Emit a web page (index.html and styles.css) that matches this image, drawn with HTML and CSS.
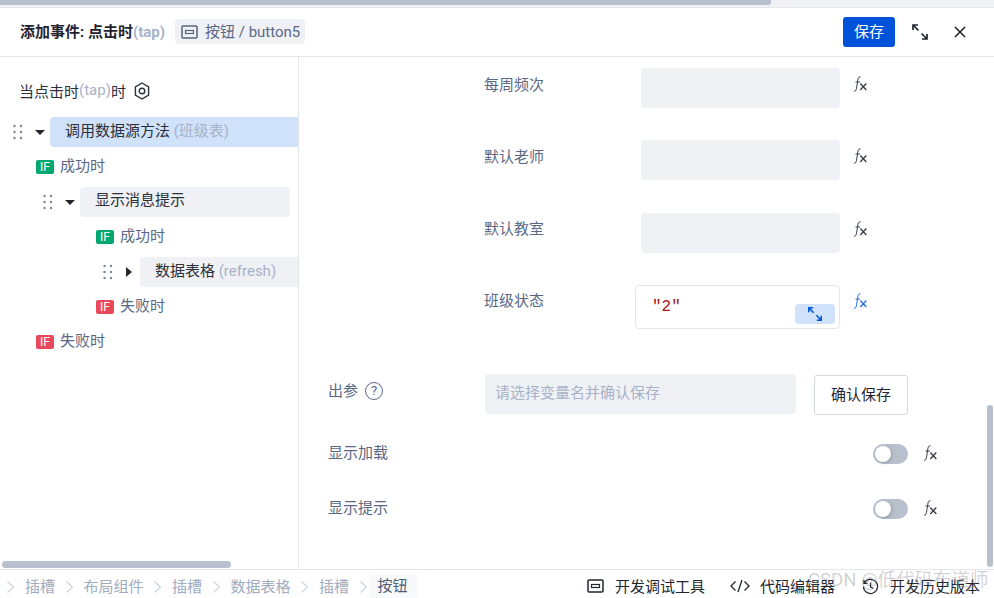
FILE: index.html
```html
<!DOCTYPE html>
<html lang="zh">
<head>
<meta charset="utf-8">
<title>添加事件</title>
<link rel="stylesheet" href="styles.css">
</head>
<body>
<svg class="defs" width="0" height="0" aria-hidden="true">
  <symbol id="fx" viewBox="0 0 14 16">
    <path d="M1 15.200c1.300.3 2-.6 2.400-2.400L5 3c.3-1.700 1.200-2.400 2.600-2.100M2.500 6H7" fill="none" stroke="currentColor" stroke-width="1"/>
    <path d="M7.300 7.500l6 6.500M13.300 7.500l-6 6.500" fill="none" stroke="currentColor" stroke-width="1.400"/>
  </symbol>
  <symbol id="expand" viewBox="0 0 18 18">
    <path d="M2 7V2h5M2 2l5.500 5.500M16 11v5h-5M16 16l-5.500-5.500" fill="none" stroke="currentColor" stroke-width="1.700"/>
  </symbol>
  <symbol id="btnicon" viewBox="0 0 17 14">
    <rect x="1" y="1" width="15" height="12" rx="1" fill="none" stroke="currentColor" stroke-width="1.500"/>
    <rect x="4.500" y="5.500" width="8" height="3" fill="none" stroke="currentColor" stroke-width="1.200"/>
  </symbol>
  <symbol id="grip" viewBox="0 0 10 16">
    <g fill="currentColor"><circle cx="1.500" cy="2" r="1.200"/><circle cx="8" cy="2" r="1.200"/><circle cx="1.500" cy="8" r="1.200"/><circle cx="8" cy="8" r="1.200"/><circle cx="1.500" cy="14" r="1.200"/><circle cx="8" cy="14" r="1.200"/></g>
  </symbol>
  <symbol id="chev" viewBox="0 0 7 12">
    <path d="M.5 .5l6 5.500-6 5.500" fill="none" stroke="currentColor" stroke-width="1.200"/>
  </symbol>
</svg>

<div class="topbar"><div class="topbar-thumb"></div></div>

<header class="header">
  <div class="title">添加事件: 点击时<span class="muted">(tap)</span></div>
  <div class="tag"><svg class="tag-icon"><use href="#btnicon"/></svg>按钮 / button5</div>
  <div class="header-actions">
    <button class="save">保存</button>
    <svg class="icon-expand"><use href="#expand"/></svg>
    <svg class="icon-close" viewBox="0 0 12 12"><path d="M1 1l10 10M11 1L1 11" fill="none" stroke="currentColor" stroke-width="1.600"/></svg>
  </div>
</header>

<main class="main">
  <aside class="tree">
    <div class="tree-head">当点击时<span class="muted">(tap)</span>时
      <svg class="icon-hex" viewBox="0 0 16 18"><path d="M8 1l6.600 3.800v8.400L8 17l-6.600-3.800V4.800z" fill="none" stroke="currentColor" stroke-width="1.400"/><circle cx="8" cy="9" r="2.800" fill="none" stroke="currentColor" stroke-width="1.400"/></svg>
    </div>
    <div class="tree-list">
      <div class="node">
        <svg class="grip"><use href="#grip"/></svg><span class="caret-down"></span>
        <div class="box box-active">调用数据源方法 <span class="muted">(班级表)</span></div>
      </div>
      <div class="cond d1"><span class="badge badge-ok">IF</span>成功时</div>
      <div class="node d1 short">
        <svg class="grip"><use href="#grip"/></svg><span class="caret-down"></span>
        <div class="box">显示消息提示</div>
      </div>
      <div class="cond d2"><span class="badge badge-ok">IF</span>成功时</div>
      <div class="node d2">
        <svg class="grip"><use href="#grip"/></svg><span class="caret-right"></span>
        <div class="box">数据表格 <span class="muted">(refresh)</span></div>
      </div>
      <div class="cond d2"><span class="badge badge-fail">IF</span>失败时</div>
      <div class="cond d1"><span class="badge badge-fail">IF</span>失败时</div>
    </div>
    <div class="hscroll"></div>
  </aside>

  <section class="panel">
    <div class="params">
      <div class="param"><label class="param-label">每周频次</label><div class="input"></div><svg class="fx"><use href="#fx"/></svg></div>
      <div class="param"><label class="param-label">默认老师</label><div class="input"></div><svg class="fx"><use href="#fx"/></svg></div>
      <div class="param"><label class="param-label">默认教室</label><div class="input"></div><svg class="fx"><use href="#fx"/></svg></div>
      <div class="param param-code"><label class="param-label">班级状态</label>
        <div class="code">"2"<span class="code-expand"><svg class="icon-expand-sm"><use href="#expand"/></svg></span></div>
        <svg class="fx fx-on"><use href="#fx"/></svg>
      </div>
    </div>
    <div class="output">
      <div class="output-label">出参<span class="help">?</span></div>
      <div class="output-input">请选择变量名并确认保存</div>
      <button class="confirm">确认保存</button>
    </div>
    <div class="switch-row first"><span class="switch-label">显示加载</span><div class="switch-end"><span class="toggle"></span><svg class="fx"><use href="#fx"/></svg></div></div>
    <div class="switch-row"><span class="switch-label">显示提示</span><div class="switch-end"><span class="toggle"></span><svg class="fx"><use href="#fx"/></svg></div></div>
    <div class="vscroll"></div>
  </section>
</main>

<footer class="footer">
  <nav class="crumbs">
    <svg class="chev"><use href="#chev"/></svg><span class="crumb">插槽</span>
    <svg class="chev"><use href="#chev"/></svg><span class="crumb">布局组件</span>
    <svg class="chev"><use href="#chev"/></svg><span class="crumb">插槽</span>
    <svg class="chev"><use href="#chev"/></svg><span class="crumb">数据表格</span>
    <svg class="chev"><use href="#chev"/></svg><span class="crumb">插槽</span>
    <svg class="chev"><use href="#chev"/></svg><span class="crumb crumb-last">按钮</span>
  </nav>
  <div class="tools">
    <div class="tool tool-debug"><svg class="tool-icon"><use href="#btnicon"/></svg>开发调试工具</div>
    <div class="tool tool-code"><svg class="tool-code-icon" viewBox="0 0 20 14"><path d="M5.500 2.500L1 7l4.500 4.500M14.500 2.500L19 7l-4.500 4.500M12 1L8 13" fill="none" stroke="currentColor" stroke-width="1.300"/></svg>代码编辑器</div>
    <div class="tool tool-hist"><svg class="tool-hist-icon" viewBox="0 0 18 18"><path d="M2.300 5.500A7.500 7.500 0 1 1 1.500 9M2 1.800v3.900h3.900M9 5v4.300l3 1.800" fill="none" stroke="currentColor" stroke-width="1.300"/></svg>开发历史版本</div>
  </div>
</footer>
<div class="watermark">CSDN @低代码布道师</div>
</body>
</html>
```
FILE: styles.css
```css
* { box-sizing: border-box; }
html, body { margin: 0; padding: 0; }
body {
  width: 994px;
  height: 598px;
  overflow: hidden;
  position: relative;
  display: flex;
  flex-direction: column;
  background: #fff;
  font-family: Roboto, "Noto Sans CJK SC", sans-serif;
  font-size: 15px;
  color: #5a6885;
}
.defs { position: absolute; }
.muted { color: #a6b2c8; }

.topbar { height: 8px; background: #f0f1f5; flex: none; border-bottom: 1px solid #e4e6ec; }
.topbar-thumb { width: 771px; height: 5px; background: #b8c0cd; border-radius: 0 0 3px 0; }

.header {
  flex: none;
  height: 49px;
  display: flex;
  align-items: center;
  padding-left: 20px;
  border-bottom: 1px solid #e4e6ec;
}
.title { font-weight: 700; color: #1f2430; margin-top: -4px; }
.tag {
  display: flex;
  align-items: center;
  height: 25px;
  margin: -1px 0 0 10px;
  padding: 0 0 2px 6px;
  width: 130px;
  background: #f0f1f5;
  border-radius: 4px;
  color: #5a6885;
  white-space: nowrap;
}
.tag-icon { width: 17px; height: 14px; margin: 2px 7px 0 0; color: #56647f; }
.header-actions { margin-left: auto; display: flex; align-items: center; padding-right: 28px; }
.save {
  width: 52px;
  height: 30px;
  border: 0;
  border-radius: 3px;
  background: #0052d9;
  color: #fff;
  font: inherit;
  padding: 0 0 3px;
}
.icon-expand { width: 18px; height: 18px; margin-left: 16px; color: #22262e; }
.icon-close { width: 12px; height: 12px; margin-left: 25px; color: #22262e; }

.main { flex: 1; min-height: 0; display: flex; }
.tree {
  flex: none;
  width: 299px;
  position: relative;
  border-right: 1px solid #e4e6ec;
  overflow: hidden;
}
.tree-head {
  display: flex;
  align-items: center;
  height: 20px;
  margin: 23px 0 0 19px;
  color: #2a2f3a;
}
.icon-hex { width: 16px; height: 18px; margin: 1px 0 0 8px; color: #2a2f3a; }
.tree-list { display: flex; flex-direction: column; gap: 5px; margin-top: 17px; }
.node { display: flex; align-items: center; height: 30px; padding-left: 13px; }
.node.d1 { padding-left: 43px; }
.node.d2 { padding-left: 103px; }
.node.short { padding-right: 8px; }
.grip { width: 10px; height: 16px; color: #7b8494; flex: none; }
.caret-down, .caret-right { width: 0; height: 0; flex: none; border-style: solid; }
.caret-down { margin: 0 5px 0 12px; border-width: 5px 5px 0 5px; border-color: #22262e transparent transparent; }
.caret-right { margin: 0 8px 0 13px; border-width: 5px 0 5px 6px; border-color: transparent transparent transparent #22262e; }
.box {
  flex: 1;
  height: 30px;
  line-height: 28px;
  padding-left: 15px;
  background: #f0f1f5;
  border-radius: 4px 0 0 4px;
  color: #2a2f3a;
  white-space: nowrap;
}
.short .box { border-radius: 4px; line-height: 27px; }
.box-active { background: #d0e2fa; }
.cond { display: flex; align-items: center; height: 30px; padding: 0 0 6px 36px; }
.cond.d2 { padding-left: 96px; }
.badge {
  width: 18px;
  height: 14px;
  margin-right: 6px;
  margin-top: 5px;
  border-radius: 2px;
  color: #fff;
  font-size: 12px;
  line-height: 14px;
  text-align: center;
}
.badge-ok { background: #00a870; }
.badge-fail { background: #e8495b; }
.hscroll {
  position: absolute;
  left: 2px;
  bottom: 1px;
  width: 229px;
  height: 7px;
  border-radius: 4px;
  background: #b8c0cd;
}

.panel { flex: 1; min-width: 0; position: relative; overflow: hidden; }
.params { display: flex; flex-direction: column; gap: 32.300px; padding: 11px 0 0 185px; }
.param { display: flex; align-items: center; height: 40px; }
.param-label { width: 157px; margin-top: -10px; color: #5a6885; }
.input { width: 199px; height: 40px; background: #f0f1f5; border-radius: 4px; }
.fx { width: 14px; height: 16px; flex: none; color: #3a3f4a; }
.param .fx { margin: -8px 0 0 13px; }
.param-code { height: 44px; }
.param-code .param-label { width: 151px; margin-top: -14px; }
.param-code .fx { margin-top: -12px; }
.fx-on { color: #2a6fdb; }
.code {
  width: 205px;
  height: 44px;
  position: relative;
  padding: 10px 0 0 16px;
  border: 1px solid #e4e6ec;
  border-radius: 4px;
  font-family: "Liberation Mono", monospace;
  font-size: 16px;
  line-height: 22px;
  color: #a31515;
}
.code-expand {
  position: absolute;
  right: 4px;
  bottom: 4px;
  width: 40px;
  height: 20px;
  display: flex;
  align-items: center;
  justify-content: center;
  background: #d0e2fa;
  border-radius: 4px;
}
.icon-expand-sm { width: 16px; height: 16px; color: #0052d9; }

.output { display: flex; align-items: flex-start; margin-top: 45px; padding-left: 29px; }
.output-label { width: 157px; height: 40px; display: flex; align-items: center; margin-top: -4px; }
.help {
  width: 18px;
  height: 18px;
  margin: 3px 0 0 7px;
  border: 1.500px solid #5a6885;
  border-radius: 50%;
  font-size: 13px;
  line-height: 15px;
  text-align: center;
}
.output-input {
  width: 311px;
  height: 40px;
  padding-left: 10px;
  line-height: 38px;
  background: #f0f1f5;
  border-radius: 4px;
  color: #a6b2c8;
}
.confirm {
  width: 94px;
  height: 40px;
  margin: 1px 0 0 18px;
  padding: 0 0 2px;
  background: #fff;
  border: 1px solid #d5d9e2;
  border-radius: 3px;
  color: #1f2430;
  font: inherit;
}
.switch-row {
  display: flex;
  align-items: center;
  justify-content: space-between;
  height: 20px;
  margin-top: 35px;
  padding: 0 57px 0 29px;
}
.switch-row.first { margin-top: 29px; }
.switch-label { margin-top: -4px; }
.switch-end { display: flex; align-items: center; gap: 15px; }
.switch-end .fx { margin-top: -2px; }
.toggle {
  position: relative;
  width: 35px;
  height: 20px;
  border-radius: 10px;
  background: #b8c0cd;
}
.toggle::after {
  content: "";
  position: absolute;
  left: 2px;
  top: 2px;
  width: 16px;
  height: 16px;
  border-radius: 50%;
  background: #fff;
  box-shadow: 1px 1px 3px rgba(70, 80, 100, .35);
}
.vscroll {
  position: absolute;
  right: 1px;
  bottom: 2px;
  width: 6px;
  height: 162px;
  border-radius: 3px;
  background: #b8c0cd;
}

.footer {
  flex: none;
  height: 29px;
  display: flex;
  align-items: center;
  justify-content: space-between;
  border-top: 1px solid #e4e6ec;
}
.crumbs { display: flex; align-items: center; padding-left: 7px; color: #a0abc0; height: 100%; }
.chev { width: 7px; height: 12px; flex: none; margin-top: 6px; color: #ccd2de; }
.crumb { margin: 3px 10.500px 0 11px; }
.crumb-last {
  align-self: flex-end;
  margin: 0 0 0 3px;
  padding: 0 9px 0 8px;
  height: 23px;
  line-height: 22px;
  background: #f8f9fb;
  color: #4f5c78;
}
.tools { display: flex; align-items: center; padding: 2px 14px 0 0; color: #22262e; }
.tool { display: flex; align-items: center; white-space: nowrap; }
.tool-debug { margin-right: 25px; }
.tool-code { margin-right: 27px; }
.tool-icon { width: 17px; height: 14px; margin-right: 11px; margin-top: 2px; color: #22262e; }
.tool-code-icon { width: 20px; height: 14px; margin-right: 10px; margin-top: 2px; }
.tool-hist-icon { width: 17px; height: 17px; margin-right: 11px; margin-top: 2px; }
.watermark {
  position: absolute;
  left: 808px;
  top: 568px;
  font-size: 18.500px;
  line-height: 24px;
  white-space: nowrap;
  color: rgba(110, 110, 120, .32);
  pointer-events: none;
}
```
